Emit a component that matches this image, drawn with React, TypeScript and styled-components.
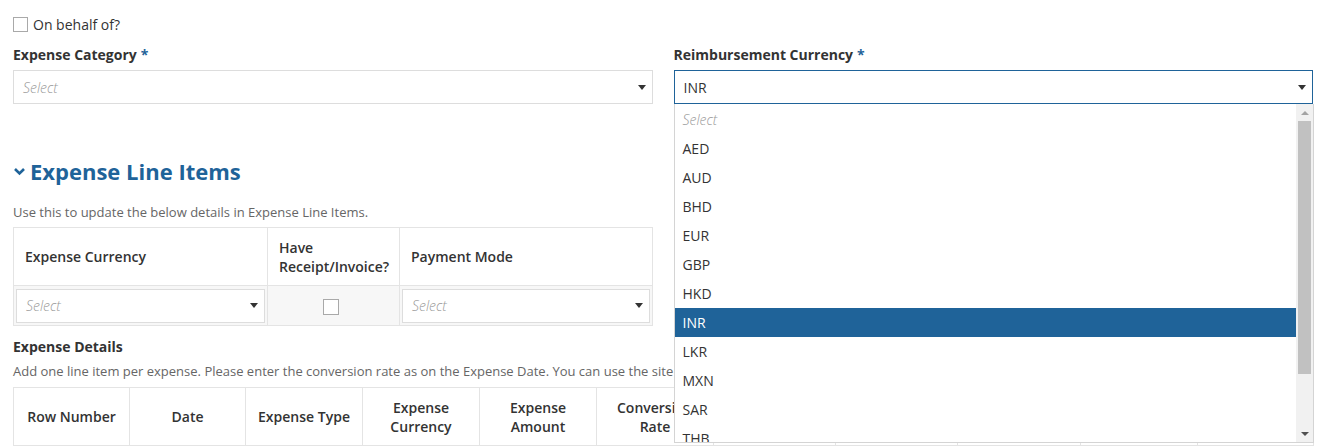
import React from 'react'
import styled, { createGlobalStyle } from 'styled-components'

const GlobalStyle = createGlobalStyle`
    html, body {
        margin: 0;
        padding: 0;
        background: #fff;
    }
    body {
        font-family: "Open Sans", "Noto Sans", sans-serif;
        color: #333;
        font-size: 14px;
        overflow: hidden;
    }
`

const blue = '#1f6399'

const Page = styled.div`
    padding: 16px 20px 0 13px;
    width: 1333px;
    box-sizing: border-box;
`

const CheckRow = styled.label`
    display: flex;
    align-items: center;
    gap: 5px;
    height: 17px;
    line-height: 17px;
    font-size: 14px;
    color: #333;
`

const Box = styled.span<{ $size?: number }>`
    display: inline-block;
    width: ${p => p.$size ?? 15}px;
    height: ${p => p.$size ?? 15}px;
    box-sizing: border-box;
    border: 1px solid #a9a9a9;
    background: #fff;
`

const FormGrid = styled.div`
    display: grid;
    grid-template-columns: 1fr 1fr;
    column-gap: 21px;
    margin-top: 12px;
`

const Field = styled.div`
    position: relative;
`

const Label = styled.div`
    font-weight: 700;
    font-size: 14px;
    line-height: 20px;
    color: #333;
    margin-bottom: 5px;
`

const Required = styled.span`
    color: ${blue};
    margin-left: 4px;
`

const SelectBox = styled.div<{ $active?: boolean }>`
    display: flex;
    align-items: center;
    justify-content: space-between;
    height: 34px;
    box-sizing: border-box;
    border: 1px solid ${p => (p.$active ? blue : '#ddd')};
    background: #fff;
    padding: 0 6px 0 9px;
`

const SelectText = styled.span<{ $placeholder?: boolean }>`
    font-size: 14px;
    color: ${p => (p.$placeholder ? '#999' : '#333')};
    font-style: ${p => (p.$placeholder ? 'italic' : 'normal')};
    font-weight: ${p => (p.$placeholder ? 300 : 400)};
`

const Caret = styled.span`
    width: 0;
    height: 0;
    border-left: 4px solid transparent;
    border-right: 4px solid transparent;
    border-top: 5px solid #333;
`

const Dropdown = styled.div`
    position: absolute;
    top: 100%;
    left: 0;
    right: -1px;
    height: 339px;
    box-sizing: border-box;
    border: 1px solid #d4d4d4;
    border-top: none;
    background: #fff;
    display: flex;
    z-index: 10;
`

const OptionList = styled.div`
    flex: 1;
    overflow: hidden;
    padding-top: 1px;
`

const Option = styled.div<{ $selected?: boolean; $placeholder?: boolean }>`
    height: 29px;
    line-height: 29px;
    padding-left: 8px;
    font-size: 14px;
    background: ${p => (p.$selected ? blue : '#fff')};
    color: ${p => (p.$selected ? '#fff' : p.$placeholder ? '#999' : '#333')};
    font-style: ${p => (p.$placeholder ? 'italic' : 'normal')};
    font-weight: ${p => (p.$placeholder ? 300 : 400)};
`

const ScrollTrack = styled.div`
    width: 17px;
    background: #f1f1f1;
    display: flex;
    flex-direction: column;
    align-items: center;
`

const ScrollArrow = styled.div<{ $down?: boolean }>`
    height: 17px;
    width: 17px;
    display: flex;
    align-items: center;
    justify-content: center;
    &::after {
        content: '';
        width: 0;
        height: 0;
        border-left: 4px solid transparent;
        border-right: 4px solid transparent;
        ${p =>
            p.$down
                ? 'border-top: 4px solid #505050;'
                : 'border-bottom: 4px solid #a3a3a3;'}
    }
`

const ScrollThumb = styled.div`
    width: 13px;
    height: 253px;
    background: #c1c1c1;
`

const ScrollSpacer = styled.div`
    flex: 1;
`

const Section = styled.div`
    margin-top: 52px;
`

const Heading = styled.h2`
    display: flex;
    align-items: center;
    gap: 4px;
    margin: 0;
    font-size: 22px;
    line-height: 30px;
    font-weight: 700;
    color: ${blue};
`

const Hint = styled.div<{ $gap: number }>`
    font-size: 13px;
    line-height: 18px;
    color: #666;
    margin-top: ${p => p.$gap}px;
    white-space: nowrap;
`

const Table = styled.table<{ $width: number; $gap: number }>`
    width: ${p => p.$width}px;
    border-collapse: collapse;
    table-layout: fixed;
    margin-top: ${p => p.$gap}px;
`

const Th = styled.th<{ $center?: boolean }>`
    border: 1px solid #e4e4e4;
    font-size: 14px;
    font-weight: 600;
    line-height: 19px;
    color: #333;
    text-align: ${p => (p.$center ? 'center' : 'left')};
    padding: 0 11px;
    height: 58px;
    box-sizing: border-box;
    vertical-align: middle;
`

const Td = styled.td`
    border: 1px solid #e4e4e4;
    background: #f7f7f7;
    padding: 2px;
    height: 40px;
    box-sizing: border-box;
    text-align: center;
    vertical-align: middle;
`

const CellCheck = styled(Box)`
    vertical-align: middle;
    margin-right: 5px;
`

const SubTitle = styled.div`
    font-weight: 700;
    font-size: 14px;
    line-height: 20px;
    color: #333;
    margin-top: 11px;
`

const ChevronIcon = () => (
    <svg width="13" height="9" viewBox="0 0 13 9">
        <polyline points="2,2 6.5,6.5 11,2" fill="none" stroke={blue} strokeWidth="2.6" />
    </svg>
)

const currencies = ['AED', 'AUD', 'BHD', 'EUR', 'GBP', 'HKD', 'INR', 'LKR', 'MXN', 'SAR', 'THB', 'USD']

const detailColumns: { title: string; width: number }[] = [
    { title: 'Row Number', width: 116 },
    { title: 'Date', width: 116 },
    { title: 'Expense Type', width: 117 },
    { title: 'Expense Currency', width: 117 },
    { title: 'Expense Amount', width: 117 },
    { title: 'Conversion Rate', width: 117 },
    { title: 'Amount in INR', width: 122 },
    { title: 'Description', width: 122 },
    { title: 'Have Receipt', width: 123 },
    { title: 'Payment Mode', width: 117 },
    { title: 'Action', width: 116 },
]

const App = () => {
    return (
        <Page>
            <GlobalStyle />
            <CheckRow>
                <Box />
                On behalf of?
            </CheckRow>

            <FormGrid>
                <Field>
                    <Label>
                        Expense Category<Required>*</Required>
                    </Label>
                    <SelectBox>
                        <SelectText $placeholder>Select</SelectText>
                        <Caret />
                    </SelectBox>
                </Field>
                <Field>
                    <Label>
                        Reimbursement Currency<Required>*</Required>
                    </Label>
                    <SelectBox $active>
                        <SelectText>INR</SelectText>
                        <Caret />
                    </SelectBox>
                    <Dropdown>
                        <OptionList>
                            <Option $placeholder>Select</Option>
                            {currencies.map(c => (
                                <Option key={c} $selected={c === 'INR'}>
                                    {c}
                                </Option>
                            ))}
                        </OptionList>
                        <ScrollTrack>
                            <ScrollArrow />
                            <ScrollThumb />
                            <ScrollSpacer />
                            <ScrollArrow $down />
                        </ScrollTrack>
                    </Dropdown>
                </Field>
            </FormGrid>

            <Section>
                <Heading>
                    <ChevronIcon />
                    Expense Line Items
                </Heading>
                <Hint $gap={17}>Use this to update the below details in Expense Line Items.</Hint>
                <Table $width={639} $gap={6}>
                    <colgroup>
                        <col style={{ width: 254 }} />
                        <col style={{ width: 132 }} />
                        <col style={{ width: 253 }} />
                    </colgroup>
                    <thead>
                        <tr>
                            <Th>Expense Currency</Th>
                            <Th>Have Receipt/Invoice?</Th>
                            <Th>Payment Mode</Th>
                        </tr>
                    </thead>
                    <tbody>
                        <tr>
                            <Td>
                                <SelectBox>
                                    <SelectText $placeholder>Select</SelectText>
                                    <Caret />
                                </SelectBox>
                            </Td>
                            <Td>
                                <CellCheck $size={16} />
                            </Td>
                            <Td>
                                <SelectBox>
                                    <SelectText $placeholder>Select</SelectText>
                                    <Caret />
                                </SelectBox>
                            </Td>
                        </tr>
                    </tbody>
                </Table>

                <SubTitle>Expense Details</SubTitle>
                <Hint $gap={5}>
                    Add one line item per expense. Please enter the conversion rate as on the Expense Date. You can
                    use the site www.xe.com to find the conversion rate for a given date.
                </Hint>
                <Table $width={1300} $gap={7}>
                    <colgroup>
                        {detailColumns.map(c => (
                            <col key={c.title} style={{ width: c.width }} />
                        ))}
                    </colgroup>
                    <thead>
                        <tr>
                            {detailColumns.map(c => (
                                <Th key={c.title} $center>
                                    {c.title}
                                </Th>
                            ))}
                        </tr>
                    </thead>
                </Table>
            </Section>
        </Page>
    )
}

export default App
